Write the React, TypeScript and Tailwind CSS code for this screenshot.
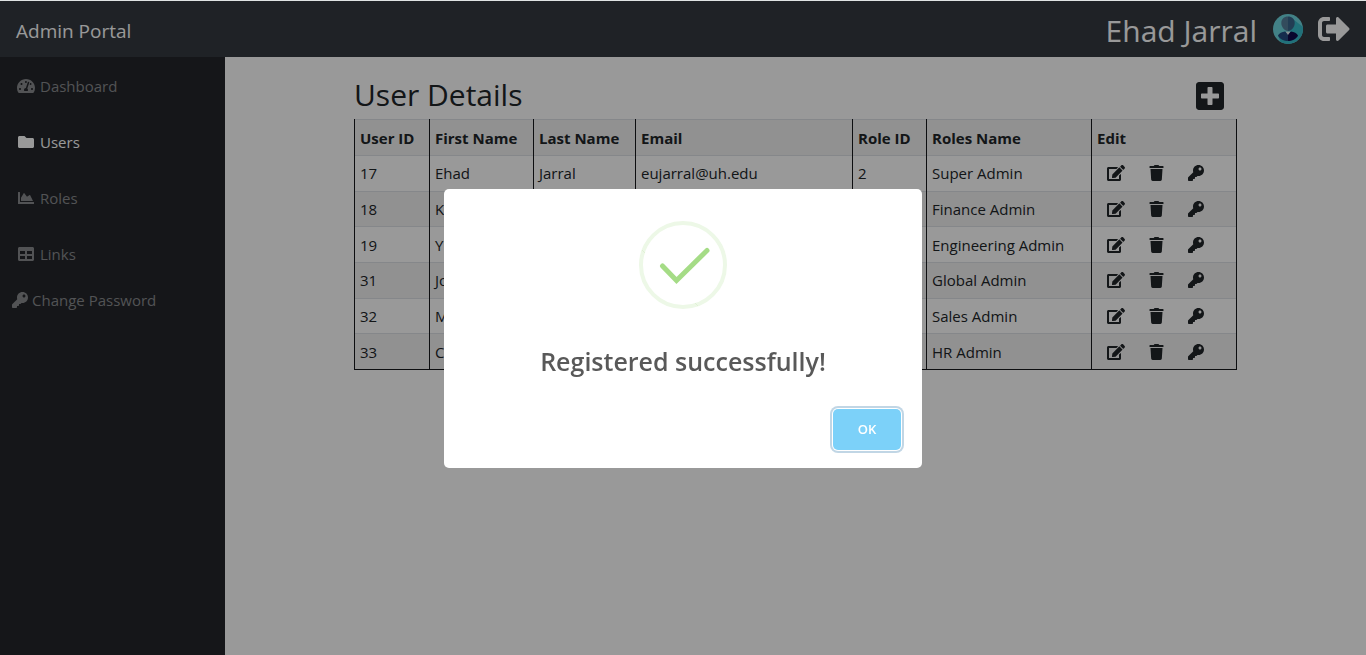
import React from "react";
import {
  FaChartArea,
  FaEdit,
  FaFolder,
  FaKey,
  FaPlusSquare,
  FaSignOutAlt,
  FaTable,
  FaTachometerAlt,
  FaTrash,
} from "react-icons/fa";

const navItems = [
  { label: "Dashboard", icon: <FaTachometerAlt className="h-4 w-[18px]" />, active: false },
  { label: "Users", icon: <FaFolder className="h-4 w-[18px]" />, active: true },
  { label: "Roles", icon: <FaChartArea className="h-4 w-[18px]" />, active: false },
  { label: "Links", icon: <FaTable className="h-4 w-[18px]" />, active: false },
];

const columns = [
  { label: "User ID", width: "w-[75px]" },
  { label: "First Name", width: "w-[104px]" },
  { label: "Last Name", width: "w-[102px]" },
  { label: "Email", width: "w-[217px]" },
  { label: "Role ID", width: "w-[74px]" },
  { label: "Roles Name", width: "w-[165px]" },
  { label: "Edit", width: "w-[145px]" },
];

const users = [
  ["17", "Ehad", "Jarral", "eujarral@uh.edu", "2", "Super Admin"],
  ["18", "K", "", "", "", "Finance Admin"],
  ["19", "Y", "", "", "", "Engineering Admin"],
  ["31", "Jo", "", "", "", "Global Admin"],
  ["32", "M", "", "", "", "Sales Admin"],
  ["33", "C", "", "", "", "HR Admin"],
];

function Avatar() {
  return (
    <svg viewBox="0 0 30 30" className="size-[30px]" aria-hidden="true">
      <defs>
        <clipPath id="avatar-clip">
          <circle cx="15" cy="15" r="15" />
        </clipPath>
      </defs>
      <g clipPath="url(#avatar-clip)">
        <rect width="30" height="30" fill="#6fd8e0" />
        <path d="M20 5L30 13V30H8L5 21L15 16Z" fill="#38bccb" />
        <path d="M5 21.500C6 19 9 18 12 17.500L15 20V27C11 27 7 25.500 5 21.500Z" fill="#234a80" />
        <path d="M25 21.500C24 19 21 18 18 17.500L15 20V27C19 27 23 25.500 25 21.500Z" fill="#100a4c" />
        <path d="M12.500 17.500L15 21L17.500 17.500Z" fill="#e8eef4" />
        <path d="M15 2.500C11 2.500 8.300 5 8.300 9C8.300 13 11.500 17 15 17Z" fill="#557f9c" />
        <path d="M15 2.500C19 2.500 21.700 5 21.700 9C21.700 13 18.500 17 15 17Z" fill="#3a668c" />
      </g>
    </svg>
  );
}

function Header() {
  return (
    <header className="flex h-[57px] items-center justify-between border-t border-[#dfe3e3] bg-[#343a40] px-4 text-white">
      <a href="#" className="pt-[3px] text-[19px] leading-7">Admin Portal</a>
      <div className="flex items-center gap-4">
        <span className="pt-[3px] text-[30px] leading-10">Ehad Jarral</span>
        <Avatar />
        <button type="button" aria-label="Sign out" className="-ml-px">
          <FaSignOutAlt className="size-8" />
        </button>
      </div>
    </header>
  );
}

function Sidebar() {
  return (
    <nav className="w-[225px] shrink-0 bg-[#24262b] pt-px text-[15px] leading-6 text-[#898b8e]">
      {navItems.map((item) => (
        <a
          key={item.label}
          href="#"
          className={
            item.active
              ? "flex h-14 items-center gap-[5px] px-[17px] text-white"
              : "flex h-14 items-center gap-[5px] px-[17px]"
          }
        >
          {item.icon}
          {item.label}
        </a>
      ))}
      <a href="#" className="flex h-9 items-center gap-1 px-3">
        <FaKey className="size-4" />
        Change Password
      </a>
    </nav>
  );
}

function UserTable() {
  return (
    <table className="h-[251px] w-full table-fixed border-collapse border border-[#16181b] border-t-[#dee2e6] text-left text-[15px] leading-6">
      <thead>
        <tr className="h-9 bg-black/5">
          {columns.map((column) => (
            <th key={column.label} className={`${column.width} border-x border-[#16181b] px-[5px] font-bold`}>
              {column.label}
            </th>
          ))}
        </tr>
      </thead>
      <tbody>
        {users.map((user) => (
          <tr key={user[0]} className="border-t border-t-[#dee2e6] even:bg-black/5">
            {user.map((value, index) => (
              <td key={index} className="border-x border-x-[#16181b] px-[5px]">
                {value}
              </td>
            ))}
            <td className="border-x border-x-[#16181b] px-[15px]">
              <div className="flex items-center gap-6">
                <button type="button" aria-label="Edit user">
                  <FaEdit className="h-4 w-[18px]" />
                </button>
                <button type="button" aria-label="Delete user">
                  <FaTrash className="h-4 w-[15px]" />
                </button>
                <button type="button" aria-label="Reset password">
                  <FaKey className="size-4" />
                </button>
              </div>
            </td>
          </tr>
        ))}
      </tbody>
    </table>
  );
}

function SuccessDialog() {
  return (
    <div className="fixed inset-x-0 top-px bottom-0 flex items-center justify-center bg-black/40">
      <div
        role="alertdialog"
        aria-modal="true"
        aria-labelledby="dialog-title"
        className="flex w-[478px] max-w-full flex-col rounded-[5px] bg-white pt-8"
      >
        <svg viewBox="0 0 88 88" className="size-[88px] self-center" fill="none" aria-hidden="true">
          <circle cx="44" cy="44" r="42" stroke="#edf8e7" strokeWidth="4" />
          <path d="M3 29L6 32M56 82L59 85" stroke="#d6ecca" strokeWidth="0.6" />
          <path d="M23.500 45L37.500 59.500L68 29.500" stroke="#a5dc86" strokeWidth="5" strokeLinecap="round" />
        </svg>
        <h2 id="dialog-title" className="mt-8 text-center text-[25px] font-semibold leading-10 text-[#595959]">
          Registered successfully!
        </h2>
        <div className="flex justify-end px-[21px] pt-7 pb-[18px]">
          <button
            type="button"
            className="h-[41px] w-[68px] rounded-[5px] bg-[#7cd1f9] pt-0.5 text-[13px] font-semibold text-white shadow-[0_0_0_1px_#fff,0_0_0_3px_rgba(43,114,165,0.29)]"
          >
            OK
          </button>
        </div>
      </div>
    </div>
  );
}

export default function App() {
  return (
    <div className="flex min-h-screen flex-col bg-white font-['Open_Sans','Noto_Sans',sans-serif] text-[#212529]">
      <Header />
      <div className="flex flex-1">
        <Sidebar />
        <main className="flex-1 pt-[18px]">
          <div className="mx-auto w-full max-w-[883px]">
            <div className="flex h-11 items-start justify-between pr-[11px]">
              <h1 className="text-[30px] leading-10">User Details</h1>
              <button type="button" aria-label="Add user" className="pt-[5px]">
                <FaPlusSquare className="size-8" />
              </button>
            </div>
            <UserTable />
          </div>
        </main>
      </div>
      <SuccessDialog />
    </div>
  );
}
